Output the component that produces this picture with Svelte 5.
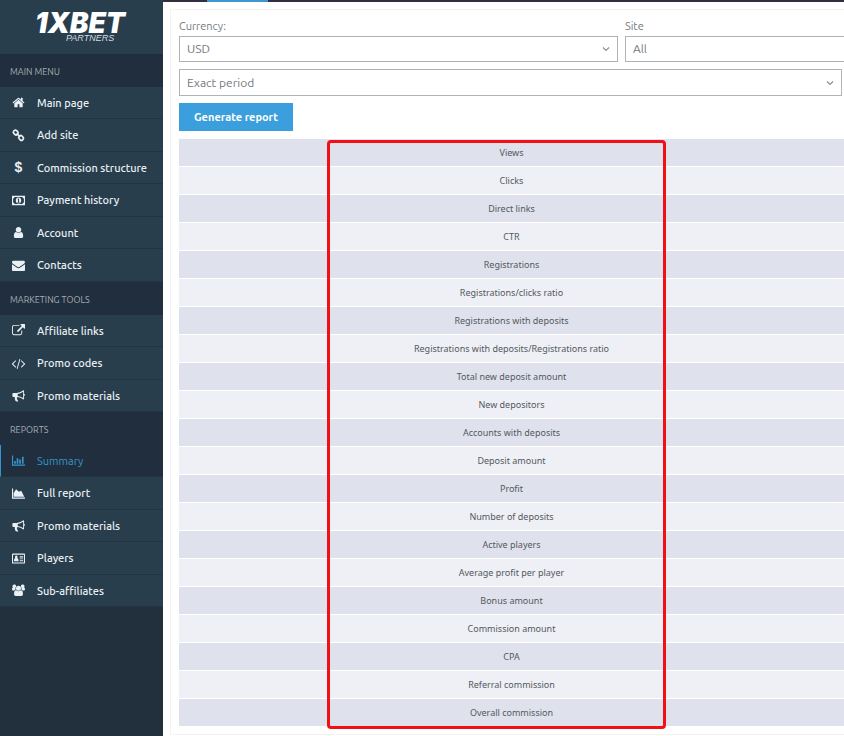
<script>
  const icons = {
    home: { box: 1792, d: 'M1472 992v480q0 26-19 45t-45 19h-384v-384h-256v384h-384q-26 0-45-19t-19-45v-480q0-1 .5-3t.5-3l575-474 575 474q1 2 1 6zm223-69l-62 74q-8 9-21 11h-3q-13 0-21-7l-692-577-692 577q-12 8-24 7-13-2-21-11l-62-74q-8-10-7-23.5t11-21.5l719-599q32-26 76-26t76 26l244 204v-195q0-14 9-23t23-9h192q14 0 23 9t9 23v408l219 182q10 8 11 21.5t-7 23.5z' },
    user: { box: 1792, d: 'M1536 1399q0 109-62.5 187t-150.5 78h-854q-88 0-150.5-78t-62.5-187q0-85 8.5-160.5t31.5-152 58.5-131 94-89 134.5-34.5q131 128 313 128t313-128q76 0 134.5 34.5t94 89 58.5 131 31.5 152 8.5 160.5zm-256-887q0 159-112.5 271.5t-271.5 112.5-271.5-112.5-112.5-271.5 112.5-271.5 271.5-112.5 271.5 112.5 112.5 271.5z' },
    envelope: { box: 1792, d: 'M1792 710v794q0 66-47 113t-113 47h-1472q-66 0-113-47t-47-113v-794q44 49 101 87 362 246 497 345 57 42 92.5 65.5t94.5 48 110 24.5h2q51 0 110-24.5t94.5-48 92.5-65.5q170-123 498-345 57-39 100-87zm0-294q0 79-49 151t-122 123q-376 261-468 325-10 7-42.5 31t-54 38.5-52 32.5-57.5 27-50 9h-2q-23 0-50-9t-57.5-27-52-32.5-54-38.5-42.5-31q-91-64-262-182.5t-205-142.5q-62-42-117-115.5t-55-136.5q0-78 41.5-130t118.5-52h1472q65 0 112.5 47t47.500 113z' },
    external: { box: 1792, d: 'M1408 928v320q0 119-84.5 203.5t-203.5 84.5h-832q-119 0-203.5-84.5t-84.5-203.5v-832q0-119 84.5-203.5t203.5-84.5h704q14 0 23 9t9 23v64q0 14-9 23t-23 9h-704q-66 0-113 47t-47 113v832q0 66 47 113t113 47h832q66 0 113-47t47-113v-320q0-14 9-23t23-9h64q14 0 23 9t9 23zm384-864v512q0 26-19 45t-45 19-45-19l-176-176-652 652q-10 10-23 10t-23-10l-114-114q-10-10-10-23t10-23l652-652-176-176q-19-19-19-45t19-45 45-19h512q26 0 45 19t19 45z' },
    code: { box: 1792, d: 'M553 1399l-50 50q-10 10-23 10t-23-10l-466-466q-10-10-10-23t10-23l466-466q10-10 23-10t23 10l50 50q10 10 10 23t-10 23l-393 393 393 393q10 10 10 23t-10 23zm591-1067l-373 1291q-4 13-15.5 19.5t-23.5 2.5l-62-17q-13-4-19.5-15.5t-2.5-24.5l373-1291q4-13 15.5-19.5t23.5-2.5l62 17q13 4 19.5 15.5t2.5 24.5zm657 651l-466 466q-10 10-23 10t-23-10l-50-50q-10-10-10-23t10-23l393-393-393-393q-10-10-10-23t10-23l50-50q10-10 23-10t23 10l466 466q10 10 10 23t-10 23z' },
    money: { box: 14, d: 'M0 2h14v10H0zM1.2 4.800v4.400A1.800 1.800 0 0 1 2.800 10.800h8.400A1.800 1.800 0 0 1 12.800 9.200V4.800a1.800 1.800 0 0 1-1.600-1.600H2.800A1.800 1.800 0 0 1 1.200 4.800zM7 3.700a2.900 3.300 0 0 1 0 6.600 2.900 3.300 0 0 1 0-6.600zM6 6l.5.300v2.200H5.900v.8h2.300v-.8h-.6V4.900h-.7z' },
    bullhorn: { box: 14, d: 'M12.2 1.300q.8 0 .8.8v3q.9.300.9 1.200t-.9 1.200v3q0 .8-.8.8Q9.400 8.900 6.100 8.500q-.9.300-.9 1.100 0 .5.5 1-.5.8.300 1.400l.9.8q-.9.9-2.500.3-1-.4-1-1.300-.7-2-.3-3.300H1.700Q.4 8.500.4 7.200V5.600Q.4 4.300 1.700 4.300h3.400q3.700-.1 7.100-3zM12 3Q9.300 5 6.200 5.300v2.200Q9.300 7.800 12 9.800z' },
    bars: { box: 14, d: 'M0 1.500h1.200v9.900H14v1.200H0zM2.300 7.500h1.800v3H2.300zM5 4.500h1.800v6H5zM7.700 6h1.800v4.500H7.700zM10.700 3h1.800v7.500h-1.800z' },
    area: { box: 14, d: 'M0 1.500h1.200v9.900H14v1.200H0zM1.800 10.500V6.500L4.400 2.500l3 2.700L9.900 4l3.300 6.500z' },
    card: { box: 14, d: 'M1 1.500h12q1 0 1 1v9q0 1-1 1H1q-1 0-1-1v-9q0-1 1-1zM1.100 3v8.400h11.800V3zM4.600 3.800a1.500 1.600 0 0 1 1 2.700Q7.200 6.700 7.200 10H2Q2 6.700 3.600 6.500a1.500 1.600 0 0 1 1-2.700zM8.300 4.500H12V6H8.300zM8.300 7H12v.9H8.300zM8.300 9H12v.9H8.300z' },
    users: { box: 14, d: 'M2.800.6a1.900 1.900 0 0 1 1.700 2Q3.300 4 3.900 5.700 3.200 6.200 2.700 7H1.200Q0 7 0 5.900 0 4 .8 3.900L1.300 4A1.900 1.900 0 0 1 2.800.6zM11.200.6a1.900 1.900 0 0 0-1.700 2q1.200 1.400.6 3.100.7.500 1.200 1.300h1.500Q14 7 14 5.900 14 4 13.200 3.900l-.5.1A1.900 1.900 0 0 0 11.200.6zM7 1.900a2.700 2.700 0 0 1 0 5.400 2.700 2.700 0 0 1 0-5.400zM4.300 6.700Q7 9 9.700 6.700q2.100.2 2.100 4.400 0 1.900-1.700 1.900H3.900q-1.700 0-1.700-1.900 0-4.200 2.100-4.400z' }
  };

  const sections = [
    { title: 'MAIN MENU', items: [
      ['home', 'Main page'], ['link', 'Add site'], ['dollar', 'Commission structure'],
      ['money', 'Payment history'], ['user', 'Account'], ['envelope', 'Contacts']
    ] },
    { title: 'MARKETING TOOLS', items: [
      ['external', 'Affiliate links'], ['code', 'Promo codes'], ['bullhorn', 'Promo materials']
    ] },
    { title: 'REPORTS', items: [
      ['bars', 'Summary'], ['area', 'Full report'], ['bullhorn', 'Promo materials'],
      ['card', 'Players'], ['users', 'Sub-affiliates']
    ] }
  ];

  const rows = [
    'Views', 'Clicks', 'Direct links', 'CTR', 'Registrations', 'Registrations/clicks ratio',
    'Registrations with deposits', 'Registrations with deposits/Registrations ratio',
    'Total new deposit amount', 'New depositors', 'Accounts with deposits', 'Deposit amount',
    'Profit', 'Number of deposits', 'Active players', 'Average profit per player',
    'Bonus amount', 'Commission amount', 'CPA', 'Referral commission', 'Overall commission'
  ];
</script>

{#snippet chevron()}
  <svg class="chevron" viewBox="0 0 8 6" aria-hidden="true"><path d="M1 1.500l3 3 3-3" fill="none" stroke="currentColor" stroke-width="1.200" /></svg>
{/snippet}

<div class="app">
  <aside>
    <a class="logo" href="#home">
      <span class="brand">1XBET</span>
      <span class="sub">PARTNERS</span>
    </a>
    <nav>
      {#each sections as section}
        <h2>{section.title}</h2>
        <ul>
          {#each section.items as [icon, label]}
            <li>
              <a href="#page" class:active={label === 'Summary'}>
                {#if icon === 'dollar'}
                  <span class="icon dollar" aria-hidden="true">$</span>
                {:else if icon === 'link'}
                  <svg class="icon" viewBox="0 0 14 14" fill="none" stroke="currentColor" stroke-width="1.800" aria-hidden="true">
                    <rect x="-2.600" y="-2.100" width="5.200" height="4.200" rx="1.800" transform="translate(4 3.800) rotate(45)" />
                    <rect x="-2.600" y="-2.100" width="5.200" height="4.200" rx="1.800" transform="translate(9.800 9.600) rotate(45)" />
                    <path d="M5 4.800l3.800 3.800" />
                  </svg>
                {:else}
                  <svg class="icon" viewBox="0 0 {icons[icon].box} {icons[icon].box}" aria-hidden="true">
                    <path d={icons[icon].d} fill="currentColor" fill-rule="evenodd" />
                  </svg>
                {/if}
                <span>{label}</span>
              </a>
            </li>
          {/each}
        </ul>
      {/each}
    </nav>
  </aside>

  <main>
    <div class="topbar"><span></span></div>
    <section class="panel">
      <form onsubmit={(e) => e.preventDefault()}>
        <div class="fields">
          <div class="field">
            <label for="currency">Currency:</label>
            <div class="select"><select id="currency"><option>USD</option></select>{@render chevron()}</div>
          </div>
          <div class="field">
            <label for="site">Site</label>
            <div class="select"><select id="site"><option>All</option></select>{@render chevron()}</div>
          </div>
        </div>
        <div class="select period">
          <select aria-label="Period"><option>Exact period</option></select>{@render chevron()}
        </div>
        <button type="submit">Generate report</button>
      </form>
      <div class="report">
        <table>
          <tbody>
            {#each rows as row}
              <tr><td>{row}</td></tr>
            {/each}
          </tbody>
        </table>
        <div class="highlight"></div>
      </div>
    </section>
  </main>
</div>

<style>
  :global(body) {
    background: #fff;
    font-family: Ubuntu, 'Noto Sans', 'Open Sans', sans-serif;
  }
  .app {
    display: flex;
    min-height: 100vh;
    overflow: hidden;
  }
  aside {
    flex: 0 0 163px;
    background: #22303d;
  }
  .logo {
    display: flex;
    flex-direction: column;
    height: 54px;
    box-sizing: border-box;
    padding: 12px 0 0 35px;
    background: #293e4d;
    color: #fff;
    font-style: italic;
    text-decoration: none;
  }
  .brand {
    font: italic 900 28px/22px Inter, sans-serif;
  }
  .sub {
    padding-left: 31px;
    color: #d5dde2;
    font: italic 9px/8px 'Liberation Sans', sans-serif;
  }
  h2 {
    margin: 0;
    padding-left: 10px;
    background: #212e3d;
    color: #a3adb6;
    font-size: 9px;
    font-weight: 400;
    line-height: 33px;
    height: 33px;
    padding-top: 2px;
    box-sizing: border-box;
  }
  ul {
    margin: 0;
    padding: 0;
    list-style: none;
  }
  li {
    height: 32px;
  }
  li:nth-child(even) {
    height: 33px;
  }
  li a {
    display: flex;
    align-items: center;
    gap: 12px;
    height: 100%;
    box-sizing: border-box;
    padding-left: 12px;
    border-bottom: 1px solid #22343f;
    background: #293e4c;
    color: #e9f1f6;
    font-size: 11px;
    font-weight: 500;
    line-height: 16px;
    text-decoration: none;
    white-space: nowrap;
  }
  li a.active {
    padding-left: 11px;
    border-left: 1px solid #3596d1;
    background: #212e3d;
    color: #3596d1;
    font-weight: 400;
  }
  .icon {
    flex: none;
    width: 13px;
    height: 13px;
    overflow: visible;
  }
  .dollar {
    font: bold 14px/13px 'Liberation Sans', sans-serif;
    text-align: center;
  }
  main {
    flex: 1;
    min-width: 0;
  }
  .topbar {
    height: 2px;
    background: #302e40;
  }
  .topbar span {
    display: block;
    width: 61px;
    height: 2px;
    margin-left: 44px;
    background: #4096d2;
  }
  .panel {
    margin: 7px 0 0 7px;
    padding: 7px 0 7px 8px;
    border: 1px solid #f3f3f2;
    border-right: 0;
    overflow: hidden;
  }
  form {
    display: flex;
    flex-direction: column;
    align-items: flex-start;
    gap: 7px;
    margin-bottom: 8px;
  }
  .fields {
    display: flex;
    gap: 7px;
    width: 100%;
  }
  .field {
    flex: 0 0 66%;
  }
  label {
    display: block;
    color: #747a80;
    font-size: 11px;
    line-height: 19px;
  }
  .select {
    display: grid;
    align-items: center;
    height: 26px;
    box-sizing: border-box;
    border: 1px solid #b0b3b7;
  }
  .period {
    align-self: stretch;
    height: 27px;
    margin-right: 2px;
  }
  .select select {
    grid-area: 1 / 1;
    width: 100%;
    height: 100%;
    padding: 0 24px 1px 7px;
    border: 0;
    background: none;
    color: #73787d;
    font: inherit;
    font-size: 12px;
    appearance: none;
  }
  .chevron {
    grid-area: 1 / 1;
    justify-self: end;
    width: 8px;
    height: 6px;
    margin-right: 7px;
    color: #8c8f92;
    pointer-events: none;
  }
  button {
    height: 28px;
    padding: 0 15px;
    border: 0;
    background: #3b9fdd;
    color: #fff;
    font: inherit;
    font-size: 11px;
    font-weight: 600;
  }
  .report {
    position: relative;
  }
  table {
    width: 100%;
    border-collapse: collapse;
  }
  td {
    height: 27px;
    padding: 0;
    border-bottom: 1px solid #fff;
    background: #eef0f5;
    color: #54585f;
    font-family: 'Noto Sans', 'Open Sans', sans-serif;
    font-size: 9px;
    line-height: 12px;
    text-align: center;
  }
  tr:nth-child(odd) td {
    background: #dfe2ec;
  }
  .highlight {
    position: absolute;
    top: 1px;
    bottom: -2px;
    left: 22.300%;
    width: 51%;
    box-sizing: border-box;
    border: 3px solid #f01015;
    border-radius: 4px;
    pointer-events: none;
  }
</style>
